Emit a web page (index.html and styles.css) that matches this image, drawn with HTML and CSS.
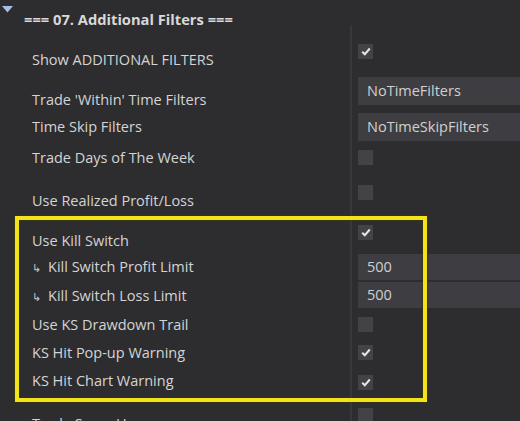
FILE: index.html
```html
<!DOCTYPE html>
<html>
<head>
<meta charset="utf-8">
<link rel="stylesheet" href="styles.css">
</head>
<body>
<div class="page">
  <div class="head">
    <svg class="caret" width="11" height="7" viewBox="0 0 11 7"><polygon points="0,0 11,0 5.5,6.5" fill="#a9bde6"/></svg>
    <span class="title">=== 07. Additional Filters ===</span>
  </div>
  <div class="cols">
    <div class="labels">
      <div class="lbl mt26">Show ADDITIONAL FILTERS</div>
      <div class="lbl mt22">Trade 'Within' Time Filters</div>
      <div class="lbl mt9">Time Skip Filters</div>
      <div class="lbl mt13">Trade Days of The Week</div>
      <div class="lbl mt25">Use Realized Profit/Loss</div>
      <div class="lbl mt22">Use Kill Switch</div>
      <div class="lbl mt8"><span class="sub">↳</span>Kill Switch Profit Limit</div>
      <div class="lbl mt11"><span class="sub">↳</span>Kill Switch Loss Limit</div>
      <div class="lbl mt11">Use KS Drawdown Trail</div>
      <div class="lbl mt10">KS Hit Pop-up Warning</div>
      <div class="lbl mt10">KS Hit Chart Warning</div>
      <div class="lbl mt25">Trade Same Hours</div>
    </div>
    <div class="divider"></div>
    <div class="values">
      <div class="cb mt19"><svg width="10" height="9" viewBox="0 0 10 9"><polyline points="1.2,4.8 3.8,7.2 8.8,1.5" fill="none" stroke="#e6e6e6" stroke-width="2"/></svg></div>
      <div class="inp h28 mt18">NoTimeFilters</div>
      <div class="inp h28 mt8">NoTimeSkipFilters</div>
      <div class="cb mt9"></div>
      <div class="cb mt20"></div>
      <div class="cb mt25"><svg width="10" height="9" viewBox="0 0 10 9"><polyline points="1.2,4.8 3.8,7.2 8.8,1.5" fill="none" stroke="#e6e6e6" stroke-width="2"/></svg></div>
      <div class="inp h26 mt14">500</div>
      <div class="inp h26 mt2">500</div>
      <div class="cb mt9"></div>
      <div class="cb mt13"><svg width="10" height="9" viewBox="0 0 10 9"><polyline points="1.2,4.8 3.8,7.2 8.8,1.5" fill="none" stroke="#e6e6e6" stroke-width="2"/></svg></div>
      <div class="cb mt15"><svg width="10" height="9" viewBox="0 0 10 9"><polyline points="1.2,4.8 3.8,7.2 8.8,1.5" fill="none" stroke="#e6e6e6" stroke-width="2"/></svg></div>
      <div class="cb mt18"></div>
    </div>
  </div>
  <div class="highlight"></div>
</div>
</body>
</html>
```

FILE: styles.css
```css
html, body {
  margin: 0;
  padding: 0;
  background: #2d2d30;
}
.page {
  position: relative;
  width: 520px;
  height: 421px;
  overflow: hidden;
  background: #2d2d30;
  font-family: "Open Sans", "Noto Sans", sans-serif;
  font-size: 14.5px;
  color: #d4d4d4;
}
.head {
  display: flex;
  align-items: flex-start;
  height: 25px;
}
.caret {
  margin: 6px 0 0 2px;
  flex: none;
}
.title {
  margin: 10px 0 0 11px;
  font-weight: 700;
  font-size: 14.7px;
  line-height: 18px;
  color: #d8d8d8;
}
.cols {
  display: flex;
  height: 396px;
}
.labels {
  width: 350px;
  padding-left: 32px;
  box-sizing: border-box;
}
.lbl {
  line-height: 18px;
  height: 18px;
  white-space: nowrap;
}
.sub {
  display: inline-block;
  width: 16px;
  font-size: 11px;
  color: #c8c8c8;
}
.divider {
  width: 2px;
  background: #38383c;
  flex: none;
}
.values {
  flex: 1;
  padding-left: 6px;
}
.cb {
  width: 15px;
  height: 15px;
  background: #434347;
  display: flex;
  align-items: center;
  justify-content: center;
}
.inp {
  background: #3e3e42;
  padding-left: 9px;
  color: #d0d0d0;
  white-space: nowrap;
}
.h28 { height: 28px; line-height: 28px; }
.h26 { height: 26px; line-height: 26px; }
.mt2 { margin-top: 2px; }
.mt8 { margin-top: 8px; }
.mt9 { margin-top: 9px; }
.mt10 { margin-top: 10px; }
.mt11 { margin-top: 11px; }
.mt13 { margin-top: 13px; }
.mt14 { margin-top: 14px; }
.mt15 { margin-top: 15px; }
.mt18 { margin-top: 18px; }
.mt19 { margin-top: 19px; }
.mt20 { margin-top: 20px; }
.mt22 { margin-top: 22px; }
.mt25 { margin-top: 25px; }
.mt26 { margin-top: 26px; }
.highlight {
  position: absolute;
  left: 15px;
  top: 216px;
  width: 412px;
  height: 186px;
  box-sizing: border-box;
  border: 4px solid #f2e31d;
  box-shadow: 0 0 0 1px rgba(60, 55, 0, 0.6), inset 0 0 0 1px rgba(60, 55, 0, 0.6);
}
```
